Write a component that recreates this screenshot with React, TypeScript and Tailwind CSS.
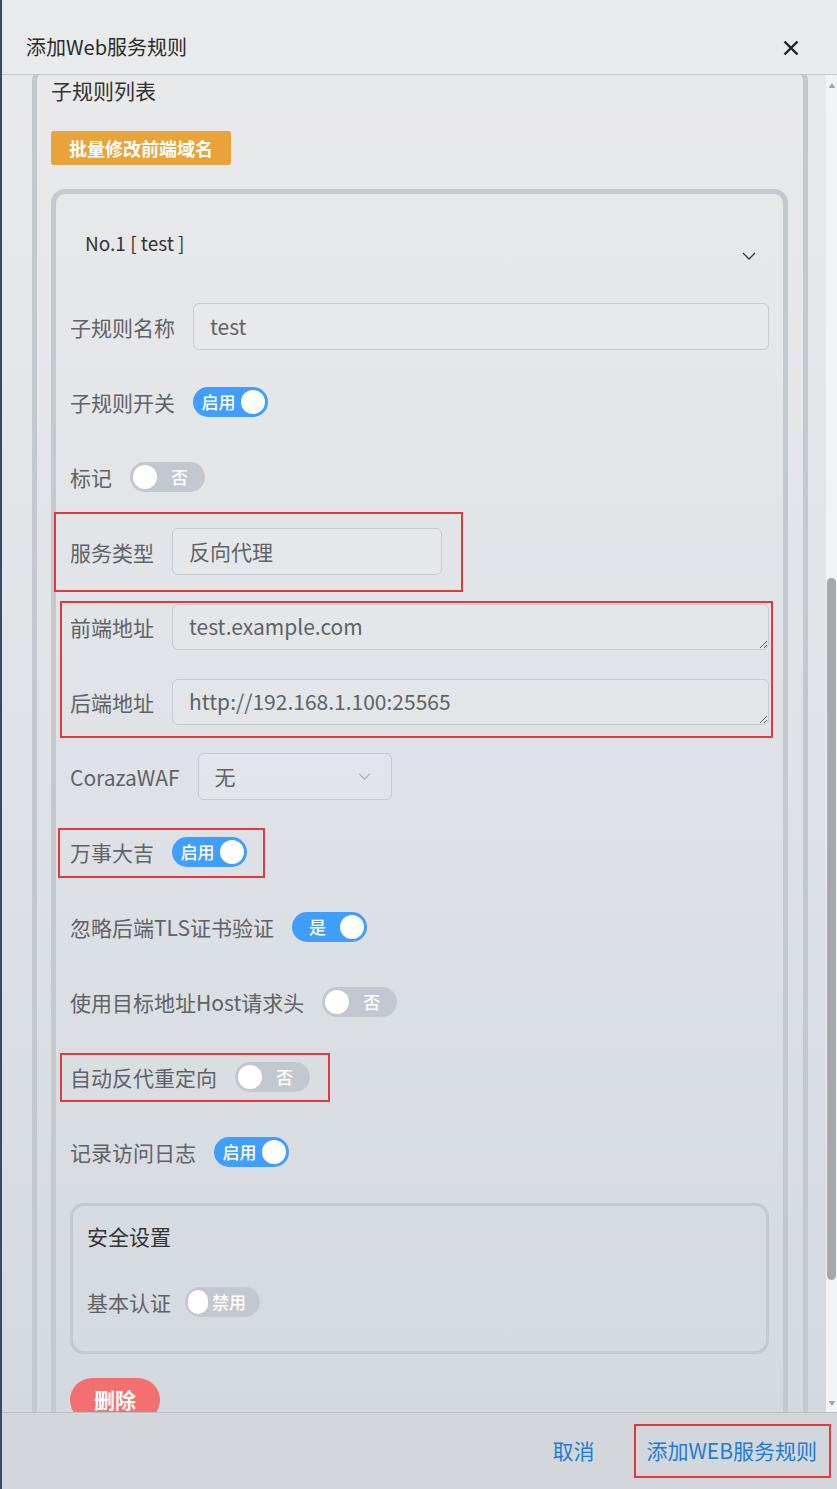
import * as React from 'react';

function Toggle({ on, text }: { on: boolean; text: string }) {
  return (
    <div
      className={`flex h-[30px] w-[75px] items-center rounded-full px-[3px] ${
        on ? 'bg-[#409eff]' : 'bg-[#c3c7cf]'
      }`}
    >
      {on ? (
        <>
          <span className="flex-1 text-center text-[17px] font-medium leading-none text-white">{text}</span>
          <span className="h-[24px] w-[24px] rounded-full bg-white" />
        </>
      ) : (
        <>
          <span className="h-[24px] w-[24px] rounded-full bg-white" />
          <span className="flex-1 text-center text-[17px] font-medium leading-none text-white">{text}</span>
        </>
      )}
    </div>
  );
}

function Mark({ className }: { className: string }) {
  return <span className={`pointer-events-none absolute border-2 border-[#e2393d] ${className}`} />;
}

function Row({
  label,
  children,
  mark,
}: {
  label: string;
  children: React.ReactNode;
  mark?: string;
}) {
  return (
    <div className="relative mb-[28px] flex h-[47px] items-center">
      {mark && <Mark className={mark} />}
      <span className="mr-[18px] text-[21px] leading-[26px] text-[#5f6267]">{label}</span>
      {children}
    </div>
  );
}

function Chevron({ className }: { className: string }) {
  return (
    <svg viewBox="0 0 14 8" className={className} fill="none" stroke="currentColor" strokeWidth="1.3">
      <path d="M1 1l6 6 6-6" />
    </svg>
  );
}

const field =
  'rounded-[6px] border border-[#c7cad0] bg-white/10 px-[16px] text-[21px] text-[#5f6267]';

export default function App() {
  return (
    <div className="flex h-[1489px] w-[837px] font-['Noto_Sans_CJK_SC',Roboto,sans-serif]">
      <div className="w-[2px] bg-[#34496b]" />
      <div className="flex min-w-0 flex-1 flex-col bg-gradient-to-b from-[#eaeaeb] via-[#dfe3e7] to-[#d3d8df]">
        {/* Header */}
        <div className="flex h-[75px] shrink-0 items-center justify-between border-b border-[#c6c8cb] bg-[#e9eaeb] pl-[24px] pr-[38px] pt-[20px]">
          <span className="text-[20px] text-[#2b2b2b]">添加Web服务规则</span>
          <svg viewBox="0 0 16 16" className="mt-[2px] h-[16px] w-[16px] text-[#1f1f1f]" stroke="currentColor" strokeWidth="2.4">
            <path d="M1.5 1.5l13 13M14.5 1.5l-13 13" />
          </svg>
        </div>

        {/* Body */}
        <div className="flex min-h-0 flex-1">
          <div className="min-w-0 flex-1 overflow-hidden pl-[30px] pr-[18px]">
            <div className="-mt-[8px] rounded-[14px] border-[5px] border-[#c3c7ce] pl-[14px] pr-[15px] pt-[5px]">
              <div className="text-[21px] leading-[26px] text-[#333]">子规则列表</div>
              <button className="mt-[28px] h-[34px] rounded-[3px] bg-[#e8a33b] px-[18px] text-[18px] font-bold text-white">
                批量修改前端域名
              </button>

              <div className="mt-[24px] rounded-[14px] border-[5px] border-[#c4c8cf] px-[14px]">
                <div className="flex h-[98px] items-center justify-between pl-[15px] pr-[13px]">
                  <span className="text-[19px] text-[#333]">No.1 [ test ]</span>
                  <Chevron className="mt-[26px] h-[8px] w-[14px] text-[#333]" />
                </div>

                <div className="pt-[11px]">
                  <Row label="子规则名称">
                    <div className={`flex h-[47px] flex-1 items-center ${field}`}>test</div>
                  </Row>
                  <Row label="子规则开关">
                    <Toggle on text="启用" />
                  </Row>
                  <Row label="标记">
                    <Toggle on={false} text="否" />
                  </Row>
                  <Row label="服务类型" mark="-left-[16px] -top-[16px] -bottom-[17px] w-[409px]">
                    <div className={`flex h-[47px] w-[270px] items-center ${field}`}>反向代理</div>
                  </Row>
                  <div className="relative flow-root">
                    <Mark className="-left-[10px] -top-[2px] -right-[4px] bottom-[15px]" />
                    <Row label="前端地址">
                      <textarea
                        readOnly
                        rows={1}
                        value="test.example.com"
                        className={`h-[46px] flex-1 resize-y pt-[8px] leading-[26px] outline-none ${field}`}
                      />
                    </Row>
                    <Row label="后端地址">
                      <textarea
                        readOnly
                        rows={1}
                        value="http://192.168.1.100:25565"
                        className={`h-[46px] flex-1 resize-y pt-[8px] leading-[26px] outline-none ${field}`}
                      />
                    </Row>
                  </div>
                  <Row label="CorazaWAF">
                    <div className={`flex h-[47px] w-[194px] items-center justify-between !pr-[20px] ${field}`}>
                      <span>无</span>
                      <Chevron className="h-[7px] w-[13px] text-[#a8abb2]" />
                    </div>
                  </Row>
                  <Row label="万事大吉" mark="-left-[12px] top-0 bottom-[-3px] w-[207px]">
                    <Toggle on text="启用" />
                  </Row>
                  <Row label="忽略后端TLS证书验证">
                    <Toggle on text="是" />
                  </Row>
                  <Row label="使用目标地址Host请求头">
                    <Toggle on={false} text="否" />
                  </Row>
                  <Row label="自动反代重定向" mark="-left-[10px] top-0 bottom-[-2px] w-[270px]">
                    <Toggle on={false} text="否" />
                  </Row>
                  <Row label="记录访问日志">
                    <Toggle on text="启用" />
                  </Row>

                  <div className="rounded-[14px] border-[3px] border-[#c4c8cf] pb-[26px] pl-[14px] pt-[17px]">
                    <div className="text-[21px] leading-[26px] text-[#333]">安全设置</div>
                    <div className="mt-[29px] flex h-[47px] items-center">
                      <span className="mr-[14px] text-[21px] leading-[26px] text-[#5f6267]">基本认证</span>
                      <div className="flex h-[30px] w-[75px] items-center gap-[4px] rounded-full bg-[#c3c7cf] px-[3px]">
                        <span className="h-[24px] w-[20px] rounded-full bg-white" />
                        <span className="text-[17px] font-medium leading-none text-white">禁用</span>
                      </div>
                    </div>
                  </div>

                  <button className="mt-[24px] h-[44px] w-[90px] rounded-full bg-[#f47070] text-[21px] font-bold text-white">
                    删除
                  </button>
                  <div className="h-[40px]" />
                </div>
              </div>
            </div>
          </div>

          {/* Scrollbar */}
          <div className="flex w-[11px] shrink-0 flex-col items-center bg-[#f2f3f7]">
            <svg viewBox="0 0 8 6" className="mt-[8px] h-[5px] w-[8px] text-[#a3a4a8]" fill="currentColor">
              <path d="M4 0l4 6H0z" />
            </svg>
            <div className="mt-[490px] h-[702px] w-[9px] rounded-full bg-[#a7a8ac]" />
            <div className="flex-1" />
            <svg viewBox="0 0 8 6" className="mb-[6px] h-[5px] w-[8px] text-[#a3a4a8]" fill="currentColor">
              <path d="M0 0h8L4 6z" />
            </svg>
          </div>
        </div>

        {/* Footer */}
        <div className="flex h-[77px] shrink-0 items-center justify-end gap-[40px] border-t border-[#bcc0c5] bg-[#d3d6db] pr-[6px]">
          <span className="text-[21px] text-[#1d7dd6]">取消</span>
          <div className="relative flex h-[54px] items-center pl-[12px] pr-[14px]">
            <Mark className="inset-0" />
            <span className="text-[21px] text-[#1d7dd6]">添加WEB服务规则</span>
          </div>
        </div>
      </div>
    </div>
  );
}
